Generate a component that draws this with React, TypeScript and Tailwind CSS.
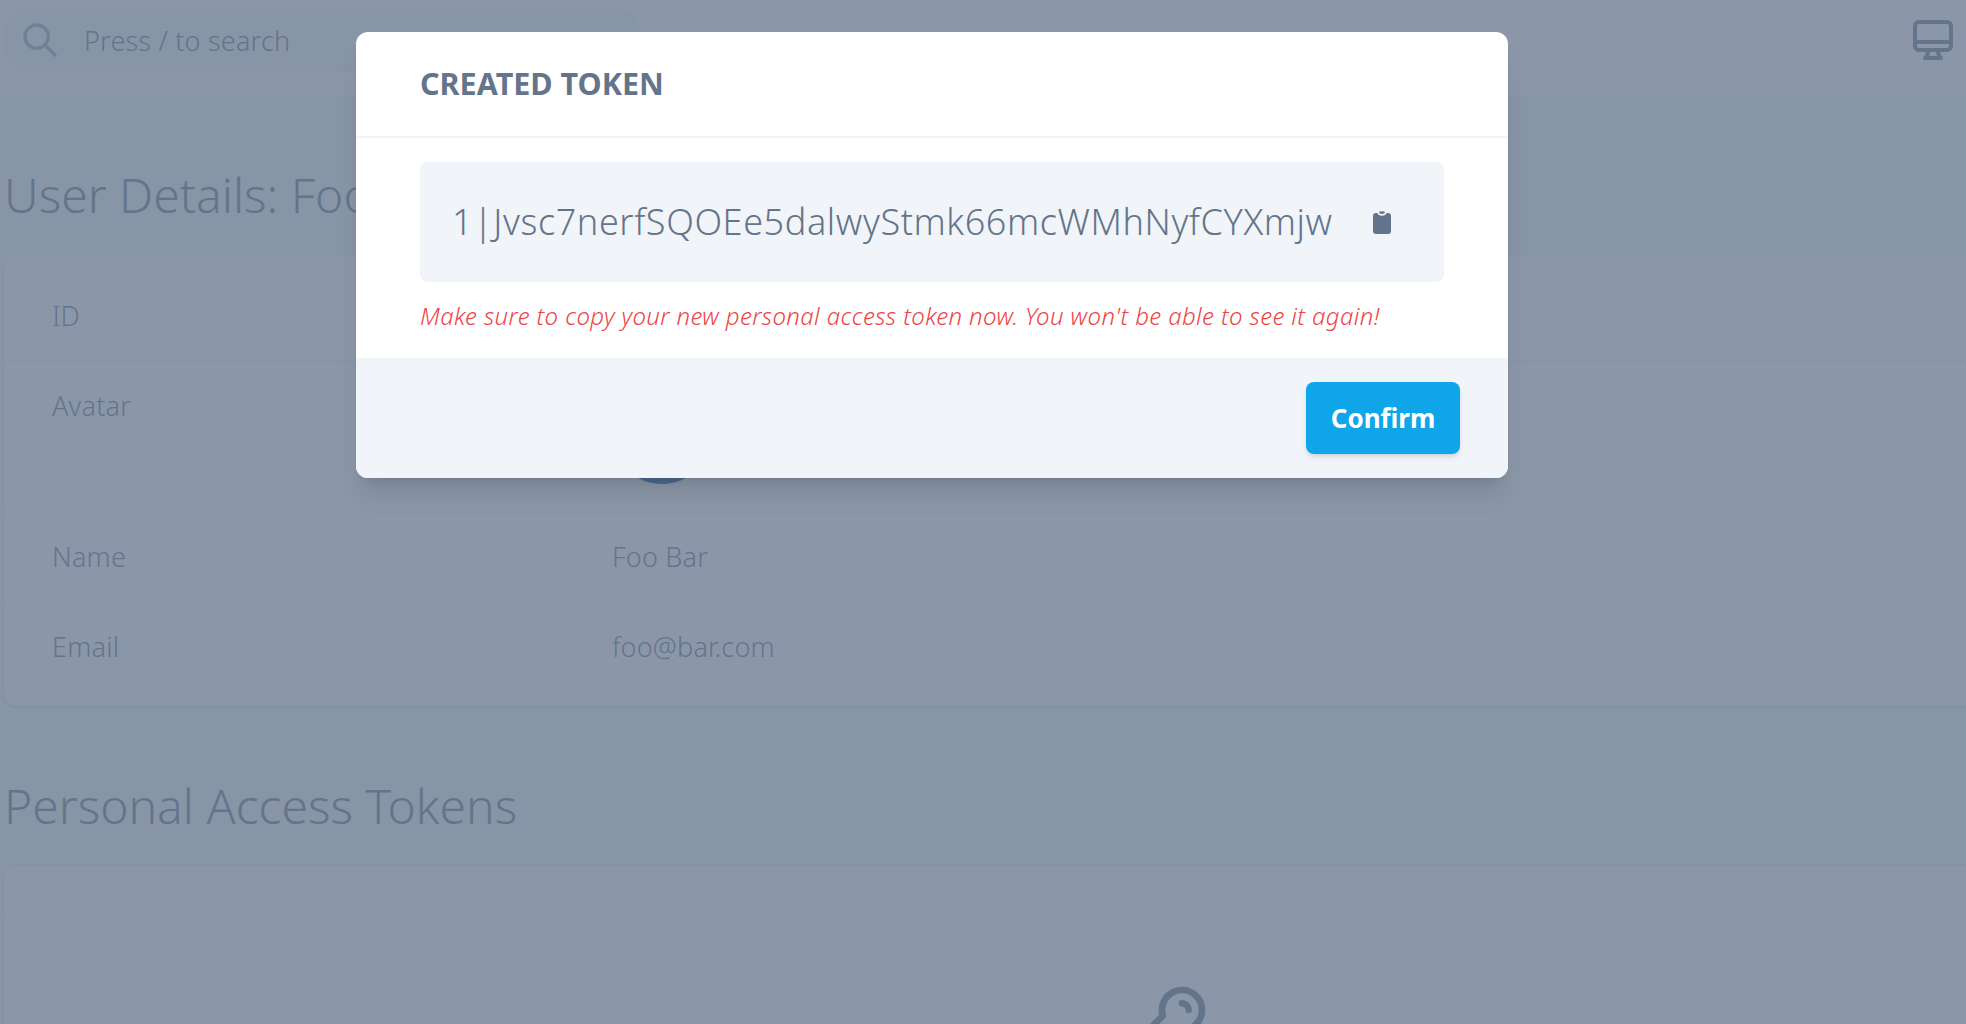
import { Fragment } from "react";

const fontStack = { fontFamily: '"Noto Sans", sans-serif' };

const rows = [
    { label: "ID", value: "" },
    { label: "Avatar", value: "avatar" },
    { label: "Name", value: "Foo Bar" },
    { label: "Email", value: "foo@bar.com" },
];

function Row({ label, value }: { label: string; value: string }) {
    return (
        <div className="flex items-start border-b-2 border-slate-100 px-12 py-6 last:border-b-0">
            <div className="w-[560px] text-[27px] leading-[40px] tracking-[0.2px] text-[#64748b]">{label}</div>
            {value === "avatar" ? (
                <div className="-mt-[2px] mb-[3px] h-[100px] w-[100px] rounded-full bg-[#0a4f9c]" />
            ) : (
                <div className="text-[27px] leading-[40px] tracking-[0.2px] text-[#64748b]">{value}</div>
            )}
        </div>
    );
}

export default function App() {
    return (
        <div className="relative h-screen w-full overflow-hidden bg-slate-100 font-light" style={fontStack}>
            {/* Top bar */}
            <div className="flex h-24 items-center justify-between bg-white pb-4 pl-1 pr-[9px]">
                <div className="flex h-16 w-[636px] items-center rounded-[24px] bg-slate-100 pl-4">
                    <svg className="h-10 w-10 text-[#94a3b8]" viewBox="0 0 24 24" fill="none" stroke="currentColor" strokeWidth={2}>
                        <path strokeLinecap="round" strokeLinejoin="round" d="M21 21l-6-6m2-5a7 7 0 11-14 0 7 7 0 0114 0z" />
                    </svg>
                    <span className="ml-6 pt-[2px] text-[27px] tracking-[0.2px] text-[#64748b]">Press / to search</span>
                </div>
                <svg className="h-12 w-12 text-[#64748b]" viewBox="0 0 24 24" fill="none" stroke="currentColor" strokeWidth={2}>
                    <path strokeLinecap="round" strokeLinejoin="round" d="M9.75 17L9 20l-1 1h8l-1-1-.75-3M3 13h18M5 17h14a2 2 0 002-2V5a2 2 0 00-2-2H5a2 2 0 00-2 2v10a2 2 0 002 2z" />
                </svg>
            </div>

            {/* Page content */}
            <div className="w-[2340px] pl-1">
                <h1 className="mt-[66px] text-[48px] leading-[66px] text-[#64748b]">User Details: Foo Bar</h1>
                <div className="mt-7 rounded-xl bg-white pb-[15px] pt-4 shadow-sm">
                    {rows.map((r) => (
                        <Fragment key={r.label}>
                            <Row label={r.label} value={r.value} />
                        </Fragment>
                    ))}
                </div>
                <h2 className="mt-[67px] text-[48px] leading-[66px] text-[#64748b]">Personal Access Tokens</h2>
                <div className="mt-[27px] rounded-xl bg-white shadow-sm">
                    <div className="h-[50px] border-b-2 border-slate-100" />
                    <div className="flex justify-center pt-16">
                        <svg className="h-20 w-20 text-[#64748b]" viewBox="0 0 24 24" fill="none" stroke="currentColor" strokeWidth={2}>
                            <path strokeLinecap="round" strokeLinejoin="round" d="M15 7a2 2 0 012 2m4 0a6 6 0 01-7.743 5.743L11 17H9v2H7v2H4a1 1 0 01-1-1v-2.586a1 1 0 01.293-.707l5.964-5.964A6 6 0 1121 9z" />
                        </svg>
                    </div>
                </div>
            </div>

            {/* Backdrop and modal */}
            <div className="absolute inset-0 bg-[#64748b]/75">
                <div className="absolute left-[356px] top-8 w-[1152px] rounded-xl bg-white shadow-xl">
                    <div className="flex h-[106px] items-center border-b-2 border-slate-100 px-16">
                        <h3 className="text-[30.5px] font-bold uppercase text-[#64748b]">Created Token</h3>
                    </div>
                    <div className="px-16 pt-6">
                        <div className="flex h-[120px] items-center justify-between rounded-lg bg-slate-100 pl-8 pr-[53px]">
                            <span className="text-[36px] font-light tracking-[0.6px] text-[#64748b]">1|Jvsc7nerfSQOEe5dalwyStmk66mcWMhNyfCYXmjw</span>
                            <svg className="h-[23px] w-[18px] text-[#64748b]" viewBox="0 0 18 23" fill="currentColor">
                                <ellipse cx="9" cy="1.6" rx="3" ry="1.4" />
                                <path d="M3 2h1.5C5 5.5 13 5.5 13.5 2H15a3 3 0 013 3v15a3 3 0 01-3 3H3a3 3 0 01-3-3V5a3 3 0 013-3z" />
                            </svg>
                        </div>
                        <p className="pb-[26px] pt-[18px] text-[24px] italic leading-[32px] tracking-[0.38px] text-[#ef4444]">
                            Make sure to copy your new personal access token now. You won't be able to see it again!
                        </p>
                    </div>
                    <div className="flex h-[120px] items-center justify-end rounded-b-xl bg-slate-100 pr-12">
                        <button className="h-[72px] w-[154px] rounded-lg bg-[#0ea5e9] text-[26px] font-bold text-white shadow-md">Confirm</button>
                    </div>
                </div>
            </div>
        </div>
    );
}
